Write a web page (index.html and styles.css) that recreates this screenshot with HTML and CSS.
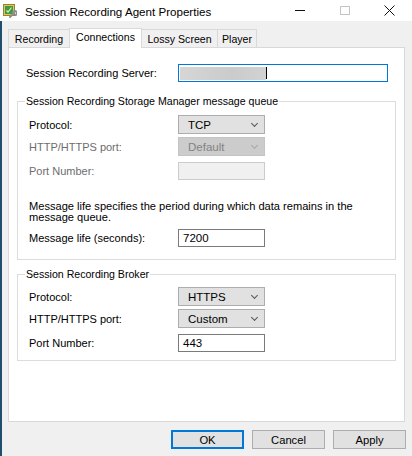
FILE: index.html
```html
<!DOCTYPE html>
<html>
<head>
<meta charset="utf-8">
<link rel="stylesheet" href="styles.css">
</head>
<body>
<div class="window">
  <div class="titlebar">
    <svg class="app-icon" width="14" height="14" viewBox="0 0 14 14">
      <rect x="0.5" y="0.5" width="11" height="11" fill="#e2c35a" stroke="#a0822a"/>
      <rect x="2" y="2" width="8" height="8" fill="#3f9a44"/>
      <path d="M3.5 6.5 L5 8 L8.5 3.5" stroke="#d9f0b0" stroke-width="1.2" fill="none"/>
      <path d="M7 13 L11 9 M10 8.5 a2 2 0 1 1 2.5 2.5" stroke="#8a8f96" stroke-width="2" fill="none" stroke-linecap="round"/>
    </svg>
    <span class="title">Session Recording Agent Properties</span>
    <div class="caption-buttons">
      <div class="cap-btn"><span class="min-glyph"></span></div>
      <div class="cap-btn"><span class="max-glyph"></span></div>
      <div class="cap-btn">
        <svg width="11" height="11" viewBox="0 0 11 11"><path d="M0.5 0.5 L10.5 10.5 M10.5 0.5 L0.5 10.5" stroke="#111" stroke-width="1"/></svg>
      </div>
    </div>
  </div>
  <div class="main">
    <div class="tabs">
      <div class="tab tab-recording">Recording</div>
      <div class="tab tab-connections active">Connections</div>
      <div class="tab tab-lossy">Lossy Screen</div>
      <div class="tab tab-player">Player</div>
    </div>
    <div class="panel">
      <div class="server-row">
        <span class="server-label">Session Recording Server:</span>
        <div class="server-input"><span class="blur"></span><span class="caret"></span></div>
      </div>

      <div class="group group-queue">
        <span class="group-title">Session Recording Storage Manager message queue</span>
        <div class="row">
          <span class="label">Protocol:</span>
          <div class="select"><span>TCP</span><span class="chev"></span></div>
        </div>
        <div class="row row-gap-s">
          <span class="label disabled">HTTP/HTTPS port:</span>
          <div class="select is-disabled"><span>Default</span><span class="chev"></span></div>
        </div>
        <div class="row row-gap-m">
          <span class="label disabled">Port Number:</span>
          <div class="textbox is-disabled"></div>
        </div>
        <p class="note">Message life specifies the period during which data remains in the message queue.</p>
        <div class="row row-gap-note">
          <span class="label">Message life (seconds):</span>
          <div class="textbox">7200</div>
        </div>
      </div>

      <div class="group group-broker">
        <span class="group-title">Session Recording Broker</span>
        <div class="row">
          <span class="label">Protocol:</span>
          <div class="select"><span>HTTPS</span><span class="chev"></span></div>
        </div>
        <div class="row row-gap-s">
          <span class="label">HTTP/HTTPS port:</span>
          <div class="select"><span>Custom</span><span class="chev"></span></div>
        </div>
        <div class="row row-gap-m">
          <span class="label">Port Number:</span>
          <div class="textbox">443</div>
        </div>
      </div>
    </div>
    <div class="buttons">
      <div class="btn default">OK</div>
      <div class="btn">Cancel</div>
      <div class="btn">Apply</div>
    </div>
  </div>
</div>
</body>
</html>
```
FILE: styles.css
```css
* { box-sizing: border-box; }
html, body { margin: 0; padding: 0; }
body {
  width: 412px;
  height: 456px;
  overflow: hidden;
  font-family: "Liberation Sans", Arial, sans-serif;
  font-size: 11px;
  color: #000;
  background: #fff;
}
.window { display: flex; flex-direction: column; height: 456px; }

.titlebar {
  height: 21px;
  background: #fff;
  display: flex;
  align-items: center;
}
.app-icon { margin-left: 3px; flex: none; }
.title {
  margin-left: 8px;
  font-size: 11.6px;
  color: #000;
  flex: 1;
  padding-top: 1px;
}
.caption-buttons { display: flex; height: 21px; }
.cap-btn {
  width: 45px;
  height: 21px;
  display: flex;
  align-items: center;
  justify-content: center;
}
.min-glyph { width: 10px; height: 1px; background: #111; }
.max-glyph { width: 10px; height: 9px; border: 1px solid #c4c4c4; }

.main {
  flex: 1;
  background: #f0f0f0;
  border-left: 2px solid #1f4e6e;
  padding: 7px 7px 0 6px;
  display: flex;
  flex-direction: column;
}

.tabs { display: flex; align-items: flex-end; height: 19px; }
.tab {
  height: 18px;
  border: 1px solid #d9d9d9;
  border-bottom: none;
  border-right: none;
  background: #f0f0f0;
  line-height: 18px;
  text-align: center;
  font-size: 10.6px;
  white-space: nowrap;
  color: #000;
}
.tab-recording { width: 61px; }
.tab-connections { width: 73px; }
.tab-lossy { width: 75px; }
.tab-player { width: 40px; }
.tab:last-child { border-right: 1px solid #d9d9d9; }
.tab.active {
  height: 20px;
  margin-bottom: -1px;
  background: #fff;
  position: relative;
  z-index: 1;
  line-height: 17px;
  border-right: 1px solid #d9d9d9;
}
.tab.active + .tab { border-left: none; }

.panel {
  height: 375px;
  background: #fff;
  border: 1px solid #d9d9d9;
  display: flex;
  flex-direction: column;
}

.server-row {
  display: flex;
  align-items: center;
  margin: 16px 0 0 17px;
}
.server-label { width: 152px; }
.server-input {
  width: 210px;
  height: 18px;
  border: 1px solid #0078d7;
  display: flex;
  align-items: center;
  padding-left: 1px;
}
.blur {
  width: 86px;
  height: 13px;
  background: linear-gradient(90deg, #d6d6d6, #cbcbcb 60%, #d2d2d2);
}
.caret { width: 1px; height: 12px; background: #000; }

.group {
  position: relative;
  margin: 19px 8px 0 8px;
  border: 1px solid #dcdcdc;
  padding-left: 11px;
}
.group-queue { padding-top: 13px; padding-bottom: 12px; }
.group-broker { margin-top: 14px; padding-top: 12px; padding-bottom: 8px; }
.group-title {
  position: absolute;
  top: -7px;
  left: 7px;
  padding: 0 1px;
  background: #fff;
  line-height: 12px;
  font-size: 10.6px;
  white-space: nowrap;
}

.row { display: flex; align-items: center; }
.row-gap-s { margin-top: 3px; }
.row-gap-m { margin-top: 6px; }
.row-gap-note { margin-top: 6px; }
.label { width: 149px; flex: none; }
.label.disabled { color: #6d6d6d; }

.select {
  width: 87px;
  height: 19px;
  background: #e1e1e1;
  border: 1px solid #adadad;
  display: flex;
  align-items: center;
  justify-content: space-between;
  padding: 0 6px 0 9px;
  font-size: 11.5px;
}
.select.is-disabled {
  background: #cccccc;
  border-color: #c4c4c4;
  color: #838383;
}
.chev {
  width: 5px;
  height: 5px;
  border-right: 1px solid #555;
  border-bottom: 1px solid #555;
  transform: rotate(45deg);
  margin-top: -3px;
  margin-right: 1px;
}
.select.is-disabled .chev { border-color: #a8a8a8; }

.textbox {
  width: 87px;
  height: 18px;
  background: #fff;
  border: 1px solid #7a7a7a;
  padding-left: 4px;
  line-height: 16px;
  font-size: 11.5px;
}
.textbox.is-disabled { background: #f0f0f0; border-color: #cccccc; }

.note {
  margin: 21px 20px 0 0;
  line-height: 11px;
  font-size: 11.1px;
}

.buttons {
  display: flex;
  justify-content: flex-end;
  gap: 8px;
  margin-top: 8px;
  margin-right: -1px;
}
.btn {
  width: 73px;
  height: 19px;
  background: #e1e1e1;
  border: 1px solid #adadad;
  display: flex;
  align-items: center;
  justify-content: center;
  font-size: 11.2px;
}
.btn.default { border: 2px solid #0078d7; }
```
